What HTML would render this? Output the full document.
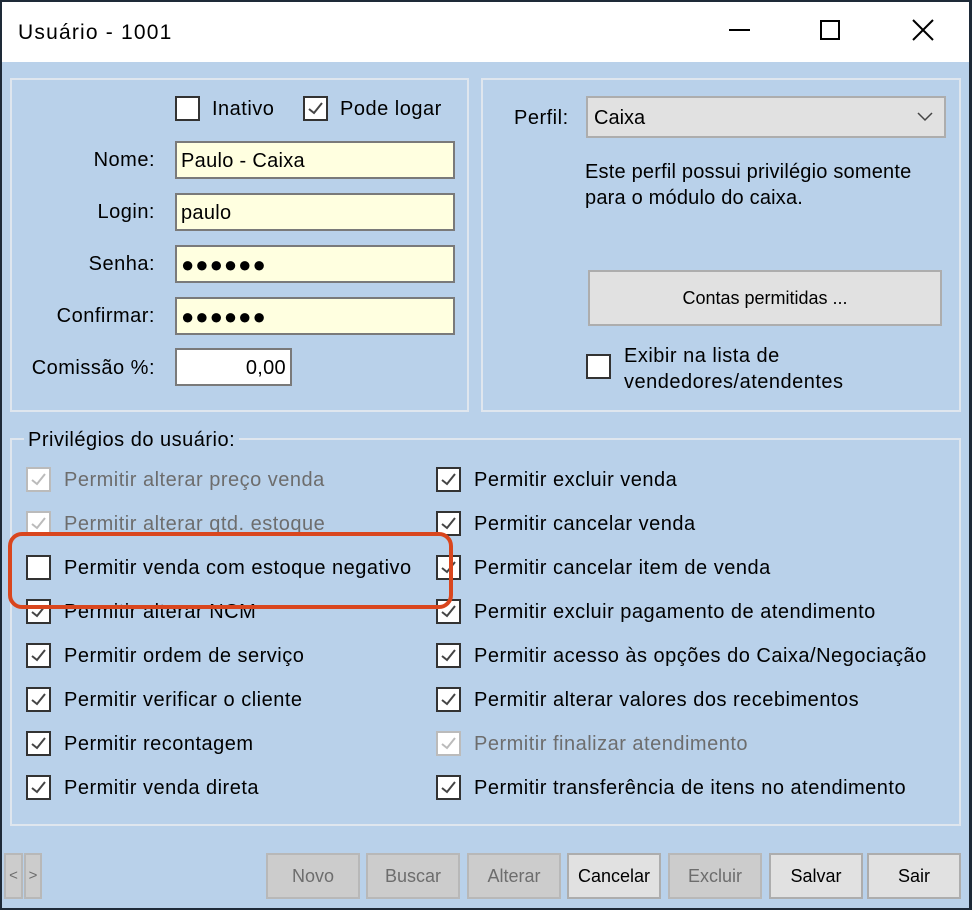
<!DOCTYPE html>
<html><head><meta charset="utf-8"><style>
*{box-sizing:border-box;margin:0;padding:0}
body{width:972px;height:910px;background:#1e2a38;position:relative;overflow:hidden;font-family:"Liberation Sans",Arial,sans-serif;color:#000}
.a{position:absolute}
.win{left:2px;top:2px;width:967px;height:906px;background:#b9d1ea}
.title{left:2px;top:2px;width:967px;height:60px;background:#fff}
.t{font-size:20px;letter-spacing:0.5px;white-space:nowrap;line-height:22px}
.box{border:2px solid #dfe6ee}
.cb{width:25px;height:25px;border:2px solid #333;background:#fff}
.cb.g{border-color:#bbb}
.in{background:#ffffe0;border:2px solid #7a7a7a;height:38px;width:280px;left:175px;font-size:20px;letter-spacing:0.3px;padding:7px 4px}
.btn{background:#cccccc;border:2px solid #b8b8b8;height:46px;top:853px;width:94px;font-size:18px;text-align:center;line-height:42px;color:#6d6d6d}
.btn.e{background:#e1e1e1;border-color:#adadad;color:#000}
.dots{font-size:22px;letter-spacing:1px;line-height:20px}
.gray{color:#6d6d6d}
</style></head><body>
<div class="a win"></div>
<div class="a title"></div>
<div class="a t" style="left:18px;top:21px;font-size:21px;line-height:24px;letter-spacing:1.2px">Usuário - 1001</div>
<div class="a" style="left:729px;top:29px;width:21px;height:2px;background:#000"></div>
<div class="a" style="left:820px;top:20px;width:20px;height:20px;border:2px solid #000"></div>
<svg class="a" style="left:912px;top:19px" width="22" height="22"><path d="M1 1L21 21M21 1L1 21" stroke="#000" stroke-width="2"/></svg>

<div class="a box" style="left:10px;top:78px;width:459px;height:334px"></div>
<div class="a box" style="left:481px;top:78px;width:480px;height:334px"></div>

<div class="a cb" style="left:175px;top:96px"></div>
<div class="a t" style="left:212px;top:98px">Inativo</div>
<div class="a cb" style="left:303px;top:96px"><svg width="21" height="21"><path d="M4 11L9 15L17 5" stroke="#444" stroke-width="2" fill="none"/></svg></div>
<div class="a t" style="left:340px;top:98px">Pode logar</div>

<div class="a t" style="right:817px;top:149px">Nome:</div>
<div class="a in" style="top:141px">Paulo - Caixa</div>
<div class="a t" style="right:817px;top:201px">Login:</div>
<div class="a in" style="top:193px">paulo</div>
<div class="a t" style="right:817px;top:253px">Senha:</div>
<div class="a in dots" style="top:245px;padding-top:8px">●●●●●●</div>
<div class="a t" style="right:817px;top:305px">Confirmar:</div>
<div class="a in dots" style="top:297px;padding-top:8px">●●●●●●</div>
<div class="a t" style="right:817px;top:357px">Comissão %:</div>
<div class="a in" style="top:348px;width:117px;background:#fff;text-align:right">0,00</div>

<div class="a t" style="left:514px;top:107px">Perfil:</div>
<div class="a" style="left:586px;top:96px;width:360px;height:42px;background:#e1e1e1;border:2px solid #adadad;font-size:20px;padding:9px 6px">Caixa</div>
<svg class="a" style="left:917px;top:112px" width="16" height="10"><path d="M1 1L8 8L15 1" stroke="#444" stroke-width="1.5" fill="none"/></svg>
<div class="a t" style="left:585px;top:159px;line-height:26px;letter-spacing:0.2px">Este perfil possui privilégio somente<br>para o módulo do caixa.</div>
<div class="a" style="left:588px;top:270px;width:354px;height:56px;background:#e1e1e1;border:2px solid #adadad;font-size:18px;text-align:center;line-height:52px">Contas permitidas ...</div>
<div class="a cb" style="left:586px;top:354px"></div>
<div class="a t" style="left:624px;top:343px;line-height:26px">Exibir na lista de<br>vendedores/atendentes</div>

<div class="a box" style="left:10px;top:438px;width:951px;height:388px"></div>
<div class="a t" style="left:24px;top:429px;background:#b9d1ea;padding:0 4px">Privilégios do usuário:</div>

<div class="a cb g" style="left:26px;top:467px"><svg width="21" height="21"><path d="M4 11L9 15L17 5" stroke="#bbb" stroke-width="2" fill="none"/></svg></div>
<div class="a t gray" style="left:64px;top:469px">Permitir alterar preço venda</div>
<div class="a cb g" style="left:26px;top:511px"><svg width="21" height="21"><path d="M4 11L9 15L17 5" stroke="#bbb" stroke-width="2" fill="none"/></svg></div>
<div class="a t gray" style="left:64px;top:513px">Permitir alterar qtd. estoque</div>
<div class="a cb" style="left:26px;top:555px"></div>
<div class="a t" style="left:64px;top:557px">Permitir venda com estoque negativo</div>
<div class="a cb" style="left:26px;top:599px"><svg width="21" height="21"><path d="M4 11L9 15L17 5" stroke="#444" stroke-width="2" fill="none"/></svg></div>
<div class="a t" style="left:64px;top:601px">Permitir alterar NCM</div>
<div class="a cb" style="left:26px;top:643px"><svg width="21" height="21"><path d="M4 11L9 15L17 5" stroke="#444" stroke-width="2" fill="none"/></svg></div>
<div class="a t" style="left:64px;top:645px">Permitir ordem de serviço</div>
<div class="a cb" style="left:26px;top:687px"><svg width="21" height="21"><path d="M4 11L9 15L17 5" stroke="#444" stroke-width="2" fill="none"/></svg></div>
<div class="a t" style="left:64px;top:689px">Permitir verificar o cliente</div>
<div class="a cb" style="left:26px;top:731px"><svg width="21" height="21"><path d="M4 11L9 15L17 5" stroke="#444" stroke-width="2" fill="none"/></svg></div>
<div class="a t" style="left:64px;top:733px">Permitir recontagem</div>
<div class="a cb" style="left:26px;top:775px"><svg width="21" height="21"><path d="M4 11L9 15L17 5" stroke="#444" stroke-width="2" fill="none"/></svg></div>
<div class="a t" style="left:64px;top:777px">Permitir venda direta</div>

<div class="a cb" style="left:436px;top:467px"><svg width="21" height="21"><path d="M4 11L9 15L17 5" stroke="#444" stroke-width="2" fill="none"/></svg></div>
<div class="a t" style="left:474px;top:469px">Permitir excluir venda</div>
<div class="a cb" style="left:436px;top:511px"><svg width="21" height="21"><path d="M4 11L9 15L17 5" stroke="#444" stroke-width="2" fill="none"/></svg></div>
<div class="a t" style="left:474px;top:513px">Permitir cancelar venda</div>
<div class="a cb" style="left:436px;top:555px"><svg width="21" height="21"><path d="M4 11L9 15L17 5" stroke="#444" stroke-width="2" fill="none"/></svg></div>
<div class="a t" style="left:474px;top:557px">Permitir cancelar item de venda</div>
<div class="a cb" style="left:436px;top:599px"><svg width="21" height="21"><path d="M4 11L9 15L17 5" stroke="#444" stroke-width="2" fill="none"/></svg></div>
<div class="a t" style="left:474px;top:601px">Permitir excluir pagamento de atendimento</div>
<div class="a cb" style="left:436px;top:643px"><svg width="21" height="21"><path d="M4 11L9 15L17 5" stroke="#444" stroke-width="2" fill="none"/></svg></div>
<div class="a t" style="left:474px;top:645px">Permitir acesso às opções do Caixa/Negociação</div>
<div class="a cb" style="left:436px;top:687px"><svg width="21" height="21"><path d="M4 11L9 15L17 5" stroke="#444" stroke-width="2" fill="none"/></svg></div>
<div class="a t" style="left:474px;top:689px">Permitir alterar valores dos recebimentos</div>
<div class="a cb g" style="left:436px;top:731px"><svg width="21" height="21"><path d="M4 11L9 15L17 5" stroke="#bbb" stroke-width="2" fill="none"/></svg></div>
<div class="a t gray" style="left:474px;top:733px">Permitir finalizar atendimento</div>
<div class="a cb" style="left:436px;top:775px"><svg width="21" height="21"><path d="M4 11L9 15L17 5" stroke="#444" stroke-width="2" fill="none"/></svg></div>
<div class="a t" style="left:474px;top:777px">Permitir transferência de itens no atendimento</div>

<div class="a" style="left:8px;top:532px;width:445px;height:77px;border:4px solid #d9461e;border-radius:14px"></div>

<div class="a btn" style="left:4px;width:19px;font-size:15px">&lt;</div>
<div class="a btn" style="left:24px;width:18px;font-size:15px">&gt;</div>
<div class="a btn" style="left:266px">Novo</div>
<div class="a btn" style="left:366px">Buscar</div>
<div class="a btn" style="left:467px">Alterar</div>
<div class="a btn e" style="left:567px">Cancelar</div>
<div class="a btn" style="left:668px">Excluir</div>
<div class="a btn e" style="left:769px">Salvar</div>
<div class="a btn e" style="left:867px">Sair</div>
</body></html>
